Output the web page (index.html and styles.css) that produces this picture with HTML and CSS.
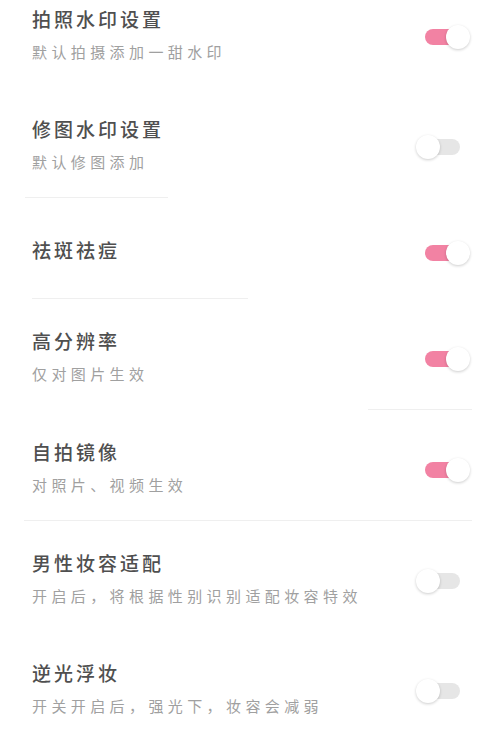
FILE: index.html
```html
<!DOCTYPE html>
<html lang="zh">
<head>
<meta charset="utf-8">
<link rel="stylesheet" href="styles.css">
</head>
<body>
<div class="list">
  <div class="row first">
    <div class="text">
      <div class="title">拍照水印设置</div>
      <div class="sub">默认拍摄添加一甜水印</div>
    </div>
    <div class="switch on"><span class="track"></span><span class="knob"></span></div>
  </div>
  <div class="row">
    <div class="text">
      <div class="title">修图水印设置</div>
      <div class="sub">默认修图添加</div>
    </div>
    <div class="switch"><span class="track"></span><span class="knob"></span></div>
  </div>
  <div class="divider d1"></div>
  <div class="row single">
    <div class="text">
      <div class="title">祛斑祛痘</div>
    </div>
    <div class="switch on"><span class="track"></span><span class="knob"></span></div>
  </div>
  <div class="divider d2"></div>
  <div class="row">
    <div class="text">
      <div class="title">高分辨率</div>
      <div class="sub">仅对图片生效</div>
    </div>
    <div class="switch on"><span class="track"></span><span class="knob"></span></div>
  </div>
  <div class="divider d3"></div>
  <div class="row">
    <div class="text">
      <div class="title">自拍镜像</div>
      <div class="sub">对照片、视频生效</div>
    </div>
    <div class="switch on"><span class="track"></span><span class="knob"></span></div>
  </div>
  <div class="divider d4"></div>
  <div class="row">
    <div class="text">
      <div class="title">男性妆容适配</div>
      <div class="sub">开启后，将根据性别识别适配妆容特效</div>
    </div>
    <div class="switch"><span class="track"></span><span class="knob"></span></div>
  </div>
  <div class="row">
    <div class="text">
      <div class="title">逆光浮妆</div>
      <div class="sub">开关开启后，强光下，妆容会减弱</div>
    </div>
    <div class="switch"><span class="track"></span><span class="knob"></span></div>
  </div>
</div>
</body>
</html>
```
FILE: styles.css
```css
html, body {
  margin: 0;
  padding: 0;
  background: #ffffff;
}
body {
  width: 486px;
  height: 730px;
  overflow: hidden;
  font-family: "Noto Sans CJK SC", "Noto Sans", sans-serif;
}
.list {
  display: flex;
  flex-direction: column;
}
.row {
  display: flex;
  align-items: center;
  justify-content: space-between;
  padding: 27px 16px 23px 32px;
  height: 60px;
}
.row.first {
  padding-top: 4px;
}
.row.single {
  padding-top: 37px;
  padding-bottom: 33px;
  height: 30px;
}
.text {
  display: flex;
  flex-direction: column;
}
.title {
  font-size: 19px;
  font-weight: 500;
  line-height: 30px;
  letter-spacing: 3px;
  color: #4f4f4f;
}
.sub {
  margin-top: 6px;
  font-size: 15px;
  line-height: 24px;
  letter-spacing: 4.4px;
  color: #a0a0a0;
}
.switch {
  position: relative;
  width: 54px;
  height: 26px;
  margin-top: 6px;
  flex-shrink: 0;
}
.track {
  position: absolute;
  left: 9px;
  right: 10px;
  top: 5px;
  height: 16px;
  border-radius: 8px;
  background: #e6e6e6;
}
.switch.on .track {
  background: #f282a3;
}
.knob {
  position: absolute;
  top: 1px;
  left: 0;
  width: 24px;
  height: 24px;
  border-radius: 50%;
  background: #ffffff;
  box-shadow: 0 1px 3px rgba(0, 0, 0, 0.2);
}
.switch.on .knob {
  left: 30px;
}
.divider {
  height: 1px;
  background: #efefef;
}
.d1 { margin-left: 25px; width: 143px; }
.d2 { margin-left: 32px; width: 216px; }
.d3 { margin-left: 368px; width: 104px; }
.d4 { margin-left: 24px; width: 448px; }
```
